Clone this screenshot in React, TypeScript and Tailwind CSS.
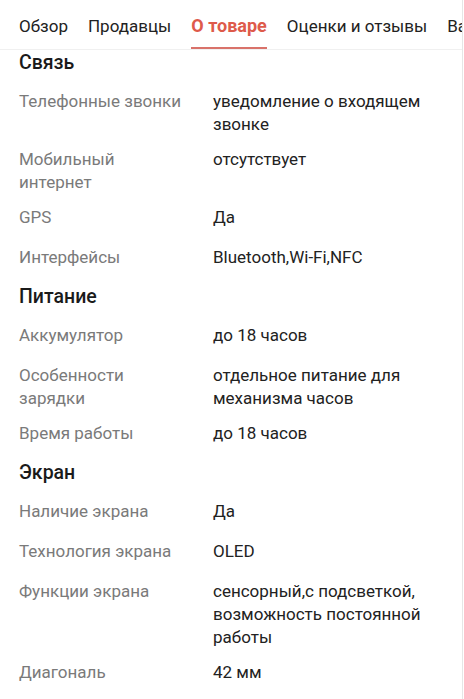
const TABS = ["Обзор", "Продавцы", "О товаре", "Оценки и отзывы", "Вам может понравиться"];

type Row = { label: string; value: string };
type Section = { title: string; rows: Row[] };

const SECTIONS: Section[] = [
  {
    title: "Связь",
    rows: [
      { label: "Телефонные звонки", value: "уведомление о входящем звонке" },
      { label: "Мобильный интернет", value: "отсутствует" },
      { label: "GPS", value: "Да" },
      { label: "Интерфейсы", value: "Bluetooth,Wi-Fi,NFC" },
    ],
  },
  {
    title: "Питание",
    rows: [
      { label: "Аккумулятор", value: "до 18 часов" },
      { label: "Особенности зарядки", value: "отдельное питание для механизма часов" },
      { label: "Время работы", value: "до 18 часов" },
    ],
  },
  {
    title: "Экран",
    rows: [
      { label: "Наличие экрана", value: "Да" },
      { label: "Технология экрана", value: "OLED" },
      {
        label: "Функции экрана",
        value: "сенсорный,с подсветкой, возможность постоянной работы",
      },
      { label: "Диагональ", value: "42 мм" },
    ],
  },
];

function Tabs() {
  return (
    <div className="h-[50px] flex items-stretch gap-5 pl-[19px] overflow-hidden whitespace-nowrap border-b border-[#f0f0f0]">
      {TABS.map((t) => {
        const active = t === "О товаре";
        return (
          <div
            key={t}
            className={
              active
                ? "shrink-0 flex items-center text-[18px] font-bold text-[#de5a4a] border-b-2 border-[#d9726a] pt-[4px]"
                : "shrink-0 flex items-center text-[17px] text-[#222] pt-[4px]"
            }
          >
            {t}
          </div>
        );
      })}
    </div>
  );
}

function SpecRow({ row }: { row: Row }) {
  return (
    <div className="flex min-h-[40px] py-[6px] text-[17px] leading-[23px]">
      <div className="w-[194px] shrink-0 pr-[28px] text-[#7a7a7a]">{row.label}</div>
      <div className="flex-1 pr-6 text-[#222]">{row.value}</div>
    </div>
  );
}

export default function App() {
  return (
    <div
      className="w-[463px] min-h-screen bg-white border-r border-[#e6e6e6] overflow-hidden"
      style={{ fontFamily: "Roboto, 'Noto Sans', sans-serif" }}
    >
      <Tabs />
      <div className="pl-[19px]">
        {SECTIONS.map((s, i) => (
          <section key={s.title}>
            <h2
              className={
                i === 0
                  ? "pt-px pb-[8.5px] text-[19.5px] leading-6 font-medium text-[#1a1a1a]"
                  : "pt-[5.5px] pb-[8.5px] text-[19.5px] leading-6 font-medium text-[#1a1a1a]"
              }
            >
              {s.title}
            </h2>
            {s.rows.map((r) => (
              <SpecRow key={r.label} row={r} />
            ))}
          </section>
        ))}
      </div>
    </div>
  );
}
